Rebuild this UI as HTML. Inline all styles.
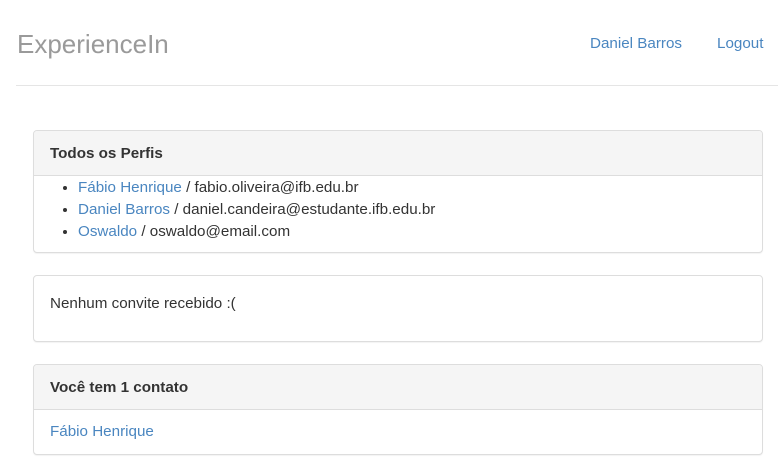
<!DOCTYPE html>
<html><head><meta charset="utf-8"><style>
*{box-sizing:border-box}
body{margin:0;font-family:"Liberation Sans",sans-serif;font-size:15.2px;line-height:22px;color:#333;background:#fff;width:778px;height:468px;overflow:hidden}
a{color:#4a86c0;text-decoration:none}
.hdr{position:absolute;left:16px;right:0;top:0;height:86px;border-bottom:1px solid #e5e5e5}
.brand{position:absolute;left:1px;top:28px;font-size:26px;line-height:32px;color:#9a9a9a}
.nav{position:absolute;top:33px;font-size:15.2px}
.panel{position:absolute;left:33px;width:730px;border:1px solid #ddd;border-radius:4px;background:#fff;box-shadow:0 1px 1px rgba(0,0,0,.05)}
.ph{background:#f5f5f5;border-bottom:1px solid #ddd;padding:12px 16px 9px;font-weight:bold;height:45px;border-radius:3px 3px 0 0}
ul{margin:0 0 10px;padding:1px 0 0 44px}
.pb{padding:15px 16px}
</style></head><body>
<div class="hdr"><div class="brand">ExperienceIn</div>
<a class="nav" style="left:574px">Daniel Barros</a><a class="nav" style="left:701px">Logout</a></div>
<div class="panel" style="top:130px;height:123px"><div class="ph">Todos os Perfis</div>
<ul><li><a>Fábio Henrique</a> / fabio.oliveira@ifb.edu.br</li><li><a>Daniel Barros</a> / daniel.candeira@estudante.ifb.edu.br</li><li><a>Oswaldo</a> / oswaldo@email.com</li></ul></div>
<div class="panel" style="top:275px;height:67px"><div class="pb" style="padding-top:17px">Nenhum convite recebido :(</div></div>
<div class="panel" style="top:364px;height:91px"><div class="ph">Você tem 1 contato</div><div class="pb" style="padding-top:11px"><a>Fábio Henrique</a></div></div>
</body></html>
